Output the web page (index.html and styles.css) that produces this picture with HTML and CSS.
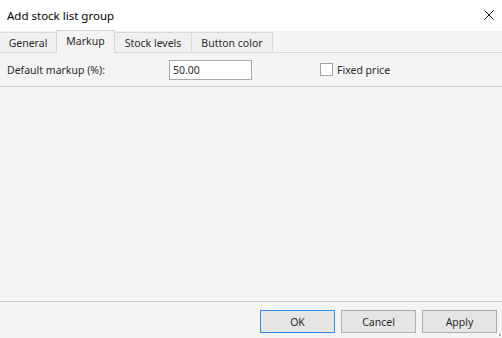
FILE: index.html
```html
<!DOCTYPE html>
<html lang="en">
<head>
    <meta charset="UTF-8">
    <title>Add stock list group</title>
    <link rel="stylesheet" href="styles.css">
</head>
<body>
    <div class="dialog">
        <div class="titlebar">
            <span class="title">Add stock list group</span>
            <svg class="close" width="10" height="10" viewBox="0 0 10 10">
                <path d="M0.5 0.5 L9.5 9.5 M9.5 0.5 L0.5 9.5" stroke="#111" stroke-width="1"/>
            </svg>
        </div>

        <!-- Tabs -->
        <div class="tabs">
            <div class="tab tab-general">General</div>
            <div class="tab tab-markup active">Markup</div>
            <div class="tab tab-stock">Stock levels</div>
            <div class="tab tab-color">Button color</div>
        </div>

        <!-- Markup page -->
        <div class="field-row">
            <label class="field-label" for="markup">Default markup (%):</label>
            <input class="field-input" id="markup" type="text" value="50.00">
            <label class="check">
                <span class="check-box"></span>
                Fixed price
            </label>
        </div>

        <div class="page"></div>

        <div class="footer">
            <button class="btn btn-default">OK</button>
            <button class="btn">Cancel</button>
            <button class="btn">Apply</button>
            <span class="grip"></span>
        </div>
    </div>
</body>
</html>
```

FILE: styles.css
```css
html, body {
    margin: 0;
    padding: 0;
}
body {
    font-family: 'Noto Sans', 'Open Sans', sans-serif;
    font-size: 10.5px;
    color: #2a2a2a;
    background: #f4f4f4;
}
.dialog {
    width: 502px;
    height: 338px;
    display: flex;
    flex-direction: column;
    background: #f4f4f4;
}
.titlebar {
    height: 31px;
    flex: none;
    background: #fff;
    display: flex;
    align-items: center;
    justify-content: space-between;
    padding: 0 8px 0 7px;
    box-sizing: border-box;
}
.title {
    font-size: 11.5px;
    color: #000;
    margin-top: -1px;
}
.close {
    margin-top: -1px;
}
.tabs {
    height: 22px;
    flex: none;
    display: flex;
    align-items: flex-end;
    border-bottom: 1px solid #d4d4d4;
    box-sizing: border-box;
}
.tab {
    height: 20px;
    box-sizing: border-box;
    border: 1px solid #d9d9d9;
    border-bottom: none;
    border-left: none;
    background: #f0f0f0;
    display: flex;
    align-items: center;
    justify-content: center;
}
.tab.active {
    height: 23px;
    margin-top: -1px;
    margin-bottom: -1px;
    background: #f4f4f4;
    border: 1px solid #d4d4d4;
    border-bottom: none;
    align-items: flex-start;
    padding-top: 3px;
    margin-left: -1px;
}
.tab-general { width: 57px; }
.tab-markup { width: 59px; }
.tab-stock { width: 77px; }
.tab-color { width: 81px; }
.field-row {
    height: 34px;
    flex: none;
    display: flex;
    align-items: center;
    border-bottom: 1px solid #d0d0d0;
    box-sizing: border-box;
    padding-left: 7px;
}
.field-label {
    width: 162px;
}
.field-input {
    width: 83px;
    height: 20px;
    box-sizing: border-box;
    border: 1px solid #a8a8a8;
    background: #fff;
    font-family: inherit;
    font-size: 10.5px;
    color: #2a2a2a;
    padding: 0 3px;
    margin: 0;
    outline: none;
}
.check {
    display: flex;
    align-items: center;
    margin-left: 68px;
    gap: 4px;
}
.check-box {
    width: 13px;
    height: 13px;
    box-sizing: border-box;
    border: 1px solid #a3a3a3;
    background: #fff;
}
.page {
    flex: 1;
    border-bottom: 1px solid #c8c8c8;
}
.footer {
    height: 36px;
    flex: none;
    display: flex;
    justify-content: flex-end;
    align-items: flex-start;
    gap: 6px;
    padding: 8px 5px 0 0;
    box-sizing: border-box;
    position: relative;
}
.btn {
    width: 75px;
    height: 23px;
    box-sizing: border-box;
    border: 1px solid #adadad;
    background: #e5e5e5;
    font-family: inherit;
    font-size: 10.5px;
    color: #2a2a2a;
    padding: 0;
    margin: 0;
}
.btn-default {
    border: 1px solid #2f8ae6;
}
.grip {
    position: absolute;
    right: 1px;
    bottom: 2px;
    width: 2px;
    height: 2px;
    background: #a8a8a8;
}
```
